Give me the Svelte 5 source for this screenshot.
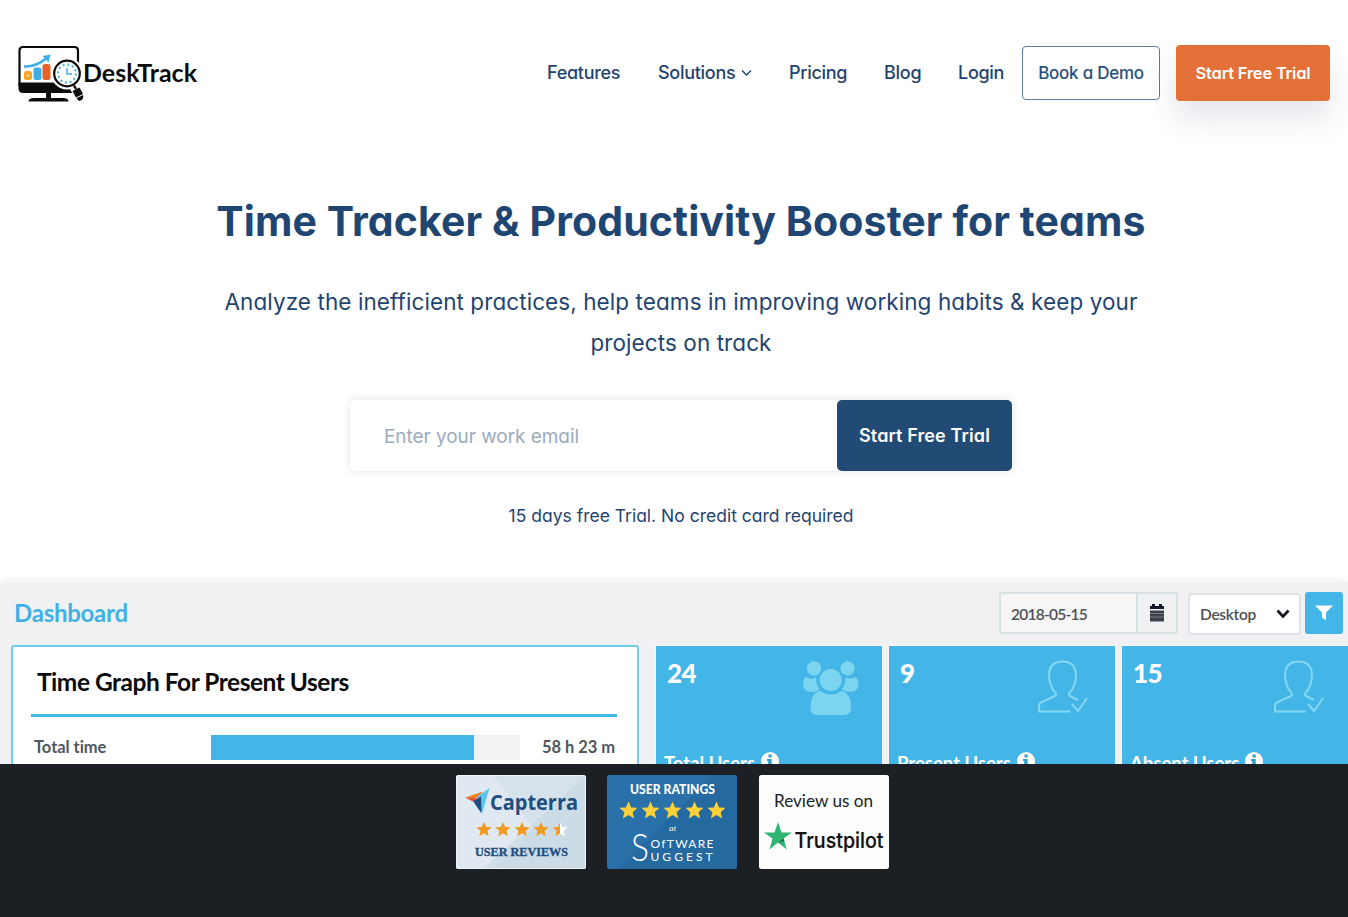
<script>
  const tiles = [
    { value: '24', label: 'Total Users', icon: 'group' },
    { value: '9', label: 'Present Users', icon: 'user' },
    { value: '15', label: 'Absent Users', icon: 'user wide' }
  ];
  const star = 'M0-9.5 2.8-3.2 9.5-2.9 4.4 1.8 6 8.4 0 4.8-6 8.4-4.4 1.8-9.5-2.9-2.8-3.2Z';
</script>

<div class="page">
  <header>
    <svg class="logo" width="182" height="60" viewBox="0 0 182 60">
      <path d="M4 2H56.500Q60 2 60 5.500V40H1.500V5.500Q1.500 2 5 2Z" fill="#fff" stroke="#0b0b0b" stroke-width="2.200" />
      <path d="M.5 37.500H61V44Q61 48 57 48H5Q.5 48 .5 43Z" fill="#0b0b0b" />
      <path d="M28 47H33V53H28Z" fill="#0b0b0b" />
      <path d="M10.500 56.500Q10.500 53 16 53H45Q50.500 53 50.500 56.500Z" fill="#0b0b0b" />
      <rect x="6" y="26" width="8" height="9" rx="2.500" fill="#f5a623" />
      <circle cx="10" cy="30.500" r="1.300" fill="#fbd78f" />
      <rect x="15.500" y="22.500" width="8" height="12.500" rx="2.500" fill="#3fb0e5" />
      <rect x="24.500" y="19" width="8" height="16" rx="2.500" fill="#e8622a" />
      <path d="M6 21.500Q18 22 28 13.500" fill="none" stroke="#3fb0e5" stroke-width="2.600" />
      <path d="M24.500 11 32.500 9.500 30.500 17.500Z" fill="#3fb0e5" />
      <circle cx="49" cy="28.500" r="16" fill="#fff" />
      <path d="M52 44 61 39 69 52 60 58Z" fill="#fff" />
      <circle cx="49" cy="28.500" r="12.800" fill="#fff" stroke="#0b0b0b" stroke-width="2.200" />
      <circle cx="49" cy="28.500" r="9" fill="none" stroke="#5fbbe6" stroke-width="2.400" stroke-dasharray="2 2.712" />
      <path d="M49 23V29H54" fill="none" stroke="#3fb0e5" stroke-width="1.500" />
      <path d="M56 40.500 58 44" stroke="#0b0b0b" stroke-width="2.400" />
      <path d="M54.500 46 61.500 42.500 65 49 58 52.500Z" fill="#0b0b0b" />
      <path d="M58.500 53.300 65 50Q66.500 55 61 56Z" fill="#0b0b0b" />
      <text x="65" y="37" textLength="114" lengthAdjust="spacingAndGlyphs">DeskTrack</text>
    </svg>
    <nav>
      <a class="w74">Features</a>
      <a class="w94">Solutions<svg width="11" height="8" viewBox="0 0 11 8"><path d="M1 1.500 5.500 6 10 1.500" fill="none" stroke="#1f4973" stroke-width="1.500" /></svg></a>
      <a class="w58">Pricing</a>
      <a class="w37">Blog</a>
      <a class="w45">Login</a>
    </nav>
    <button class="demo">Book a Demo</button>
    <button class="start">Start Free Trial</button>
  </header>

  <section class="hero">
    <h1>Time Tracker &amp; Productivity Booster for teams</h1>
    <p class="lead">Analyze the inefficient practices, help teams in improving working habits &amp; keep your<br />projects on track</p>
    <div class="form">
      <div class="field">Enter your work email</div>
      <button>Start Free Trial</button>
    </div>
    <p class="note">15 days free Trial. No credit card required</p>
  </section>

  <section class="dash">
    <div class="bar">
      <h2>Dashboard</h2>
      <div class="date">
        <div class="value">2018-05-15</div>
        <div class="cal">
          <svg width="16" height="20" viewBox="0 0 16 20"><path d="M1 3H3V1H6V3H10V1H13V3H15V6H1Z" fill="#15172a" /><path d="M1 7.500H15V18.500H1Z" fill="#3f424b" /><path d="M1 10.500H15M1 14H15" stroke="#777b84" /></svg>
        </div>
      </div>
      <div class="select">Desktop<svg width="14" height="10" viewBox="0 0 14 10"><path d="M1.500 1.500 7 7.500 12.500 1.500" fill="none" stroke="#14171c" stroke-width="2.800" /></svg></div>
      <div class="filter"><svg width="18" height="16" viewBox="0 0 18 16"><path d="M0 .5H18L11 7.500V15.500L7 12.500V7.500Z" fill="#fff" /></svg></div>
    </div>
    <div class="row">
      <div class="graph">
        <h3>Time Graph For Present Users</h3>
        <div class="line">
          <span class="name">Total time</span>
          <div class="track"><div class="fill"></div></div>
          <span class="hours">58 h 23 m</span>
        </div>
      </div>
      {#each tiles as tile}
        <div class="tile">
          <div class="top">
            <strong>{tile.value}</strong>
            {#if tile.icon === 'group'}
              <svg class="group" width="58" height="56" viewBox="0 0 58 56" fill="#7bd5f1">
                <circle cx="12" cy="8.500" r="7.200" /><circle cx="45.500" cy="8.500" r="7.200" />
                <path d="M4 17Q11 20 14 17Q14 26 18 29Q15 32 9 32Q1 31 1 25Q1 19 4 17Z" />
                <path d="M53.500 17Q46.500 20 43.500 17Q43.500 26 39.500 29Q42.500 32 48.500 32Q56.500 31 56.500 25Q56.500 19 53.500 17Z" />
                <circle cx="28.700" cy="20" r="11" />
                <path d="M18 31Q28.700 38 39.500 31Q49 33 49 48Q49 55 42 55H15.500Q8.500 55 8.500 48Q8.500 33 18 31Z" />
              </svg>
            {:else}
              <svg class={tile.icon} width="52" height="54" viewBox="0 0 52 54" fill="none" stroke="#84d8f4" stroke-width="2">
                <path d="M33 51.500H2V46Q2 43 5 42L18 36Q20 35 18.500 33Q12 26 12 14Q13 1.500 25.500 1.500Q38 1.500 39 14Q39 26 32.500 33Q31 35 33 36L41 40" />
                <path d="M35 44 41 51 50 38" />
              </svg>
            {/if}
          </div>
          <div class="label">{tile.label}<svg width="18" height="18" viewBox="0 0 18 18"><circle cx="9" cy="9" r="9" fill="#fff" /><path d="M7.500 2.500H10.700V5.500H7.500ZM6 7H10.700V13H12V15H6V13H7.200V9H6Z" fill="#2f9fd0" /></svg></div>
        </div>
      {/each}
    </div>
  </section>

  <footer>
    <svg width="130" height="94" viewBox="0 0 130 94">
      <defs><clipPath id="badge"><rect width="130" height="94" rx="2.500" /></clipPath></defs>
      <g clip-path="url(#badge)">
        <rect width="130" height="94" fill="#d5e2ec" />
        <path d="M0 0H37L78 53 37 94H0Z" fill="#e0e9f1" />
        <path d="M130 0 27 94H130Z" fill="#c7d8e5" opacity=".6" />
      </g>
      <rect x=".5" y=".5" width="129" height="93" rx="2" fill="none" stroke="#eef4f8" />
      <path d="M9 22.500 27 16.500 21.500 22.500Z" fill="#f58220" />
      <path d="M9 22.500 21.500 22.500 17 26.500Z" fill="#e4542a" />
      <path d="M21.500 21.500 33.500 13 26 38.500Z" fill="#5cc5ea" />
      <path d="M17 26 25 21.500 25.500 38.500Z" fill="#1f4e80" />
      <text class="cap" x="34" y="34.500" textLength="88" lengthAdjust="spacingAndGlyphs">Capterra</text>
      {#each [28, 47, 66, 85] as x}<path d={star} transform="translate({x} 54.500) scale(.8)" fill="#f39a21" />{/each}
      <path d={star} transform="translate(104 54.500) scale(.8)" fill="#fff" />
      <path d="M0-9.500V4.800L-6 8.400-4.400 1.800-9.500-2.900-2.800-3.200Z" transform="translate(104 54.500) scale(.8)" fill="#f39a21" />
      <text class="reviews" x="19" y="81" textLength="93" lengthAdjust="spacingAndGlyphs">USER REVIEWS</text>
    </svg>
    <svg width="130" height="94" viewBox="0 0 130 94">
      <rect width="130" height="94" rx="2.500" fill="#2971a8" />
      <path d="M105 0H130V94H12Z" fill="#205f96" opacity=".45" />
      <text class="ratings" x="23" y="19" textLength="85" lengthAdjust="spacingAndGlyphs">USER RATINGS</text>
      {#each [21.5, 43.5, 65.5, 87.5, 109.5] as x}<path d={star} transform="translate({x} 35.500) scale(.94)" fill="#fbd038" />{/each}
      <text class="at" x="62" y="56">at</text>
      <text class="soft big" x="24" y="86" textLength="18" lengthAdjust="spacingAndGlyphs">S</text>
      <text class="soft" x="43.500" y="72.500" textLength="63">OfTWARE</text>
      <text class="soft" x="43.500" y="86" textLength="62">UGGEST</text>
    </svg>
    <svg width="130" height="94" viewBox="0 0 130 94">
      <rect width="130" height="94" rx="2.500" fill="#fdfdfd" />
      <text class="rev" x="15" y="31.500" textLength="99" lengthAdjust="spacingAndGlyphs">Review us on</text>
      <path d="M19 47 22.500 57.500H33L24.500 63.500 27.800 74.500 19 67.500 10.500 74.500 13.500 63.500 5 57.500H15.500Z" fill="#2fb673" />
      <path d="M19 67.500 24.500 63.500 25.500 66Z" fill="#1b6b48" />
      <text class="trust" x="35.500" y="73" textLength="89" lengthAdjust="spacingAndGlyphs">Trustpilot</text>
    </svg>
  </footer>
</div>

<style>
  :global(body) { margin: 0; background: #fff; }
  .page { width: 1348px; height: 917px; overflow: hidden; display: flex; flex-direction: column; font-family: Inter, sans-serif; font-feature-settings: 'cv11'; color: #1f4470; white-space: nowrap; }
  h1, h2, h3, p { margin: 0; font-weight: inherit; }
  button { font: inherit; font-feature-settings: inherit; padding: 0; border: 0; box-sizing: border-box; display: block; }
  header { height: 145px; flex: none; display: flex; align-items: center; padding: 0 18px; box-sizing: border-box; }
  .logo { flex: none; margin-top: 5px; }
  .logo text { font: 700 25px Lato, sans-serif; fill: #0b0b0b; }
  nav { display: flex; gap: 37px; margin-left: auto; margin-right: 19px; font-size: 18px; font-weight: 500; letter-spacing: -.28px; }
  nav a { display: flex; align-items: center; justify-content: space-between; }
  .w74 { width: 74px; } .w94 { width: 94px; } .w58 { width: 58px; } .w37 { width: 37px; } .w45 { width: 45px; }
  .demo { width: 138px; height: 54px; border: 1.500px solid #5b7c9e; border-radius: 4px; background: #fff; color: #28507c; font-size: 17px; font-weight: 500; letter-spacing: -.25px; }
  .start { width: 154px; height: 56px; margin-left: 16px; border-radius: 4px; background: #e37036; color: #fff; font-size: 16.500px; font-weight: 600; letter-spacing: -.22px; box-shadow: 0 18px 30px rgba(30, 50, 90, .12); }
  .hero { height: 437px; flex: none; display: flex; flex-direction: column; align-items: center; padding-left: 14px; box-sizing: border-box; }
  h1 { margin-top: 50px; line-height: 52px; font-size: 41px; font-weight: 650; letter-spacing: .1px; color: #1f4672; }
  .lead { margin-top: 34px; line-height: 41px; font-size: 22.500px; text-align: center; letter-spacing: .08px; }
  .form { margin-top: 37px; width: 662px; height: 71px; display: flex; border-radius: 5px; box-shadow: 0 0 10px rgba(30, 40, 90, .13); }
  .field { flex: 1; display: flex; align-items: center; padding: 2px 0 0 34px; color: #9babbd; font-size: 19px; letter-spacing: -.05px; }
  .form button { width: 175px; border-radius: 5px; background: #214a74; color: #fff; font-size: 18px; font-weight: 600; letter-spacing: .12px; }
  .note { margin-top: 32px; line-height: 26px; font-size: 17.500px; }
  .dash { height: 182px; flex: none; overflow: hidden; background: #f1f1f4; box-shadow: 0 -2px 8px rgba(30, 30, 60, .06); border-top-left-radius: 6px; font-family: Lato, sans-serif; font-feature-settings: normal; }
  .bar { height: 63px; display: flex; align-items: center; padding: 0 5px 0 14px; }
  h2 { margin: -3px auto 0 0; font-size: 24px; font-weight: 700; letter-spacing: -.25px; color: #3fb1e4; }
  .date { display: flex; width: 179px; height: 42px; box-sizing: border-box; border: 2px solid #d7e0e3; border-radius: 3px; background: #f6f6f7; margin: -2px 10px 0 0; color: #4b5056; font-size: 15.500px; letter-spacing: -.75px; }
  .value { flex: 1; display: flex; align-items: center; padding: 2px 0 0 10px; font-weight: 600; }
  .cal { width: 38px; border-left: 2px solid #d7e0e3; background: #f0f1f3; display: grid; place-items: center; }
  .select { display: flex; width: 113px; height: 42px; box-sizing: border-box; border: 2px solid #dce4e7; border-radius: 4px; background: #fff; align-items: center; justify-content: space-between; padding: 1px 9px 0 10px; margin-right: 4px; color: #4b5056; font-size: 15.500px; letter-spacing: -.3px; font-weight: 600; }
  .filter { width: 38px; height: 42px; border-radius: 3px; background: #43b5e6; display: grid; place-items: center; margin-top: -2px; }
  .row { display: flex; height: 160px; gap: 7px; padding-left: 11px; }
  .graph { width: 628px; margin-right: 10px; box-sizing: border-box; border: 2px solid #6fcdef; border-radius: 3px; background: #fff; padding: 0 20px 0 18px; flex: none; }
  h3 { height: 70px; box-sizing: border-box; padding: 20px 0 0 6px; line-height: 30px; border-bottom: 3px solid #43b8e6; font-size: 24.500px; font-weight: 700; letter-spacing: -.48px; color: #0a0a0a; }
  .line { display: flex; align-items: center; margin-top: 16px; height: 28px; font-size: 16.500px; font-weight: 700; letter-spacing: -.05px; color: #50565e; }
  .name { width: 180px; padding-left: 3px; box-sizing: border-box; }
  .track { width: 309px; height: 25px; background: #f2f2f3; }
  .fill { width: 263px; height: 25px; background: #43b5e6; }
  .hours { margin-left: 22px; }
  .tile { width: 226px; flex: none; margin-top: 1px; background: #43b5e6; outline: 1px solid #fbf8f6; color: #fff; }
  .top { display: flex; justify-content: space-between; padding: 14px 26px 0 11px; height: 89px; box-sizing: border-box; }
  strong { font-size: 26px; line-height: 26px; font-weight: 900; letter-spacing: -.5px; }
  .group { margin-right: -4px; }
  .wide { margin-right: -3px; }
  .label { display: flex; gap: 6px; padding: 15px 0 0 8px; font-size: 18.500px; font-weight: 700; line-height: 26px; }
  .label svg { margin-top: 2px; }
  footer { flex: 1; background: #1c1f24; display: flex; justify-content: center; gap: 21.500px; padding: 11px 4px 0 0; }
  .cap { font: 700 22px 'Open Sans', sans-serif; fill: #1f4e80; }
  .reviews { font: 700 13px 'Liberation Serif', serif; fill: #1f4e80; stroke: #1f4e80; stroke-width: .4; }
  .ratings { font: 900 12.500px Lato, sans-serif; fill: #fff; }
  .at { font: italic 9px 'Liberation Serif', serif; fill: #fff; }
  .soft { font: 12px Lato, sans-serif; fill: #fff; }
  .big { font-size: 37px; font-weight: 300; }
  .rev { font: 400 18px Lato, sans-serif; fill: #222; }
  .trust { font: 500 22px Inter, sans-serif; fill: #111; stroke: #111; stroke-width: .2; }
</style>
